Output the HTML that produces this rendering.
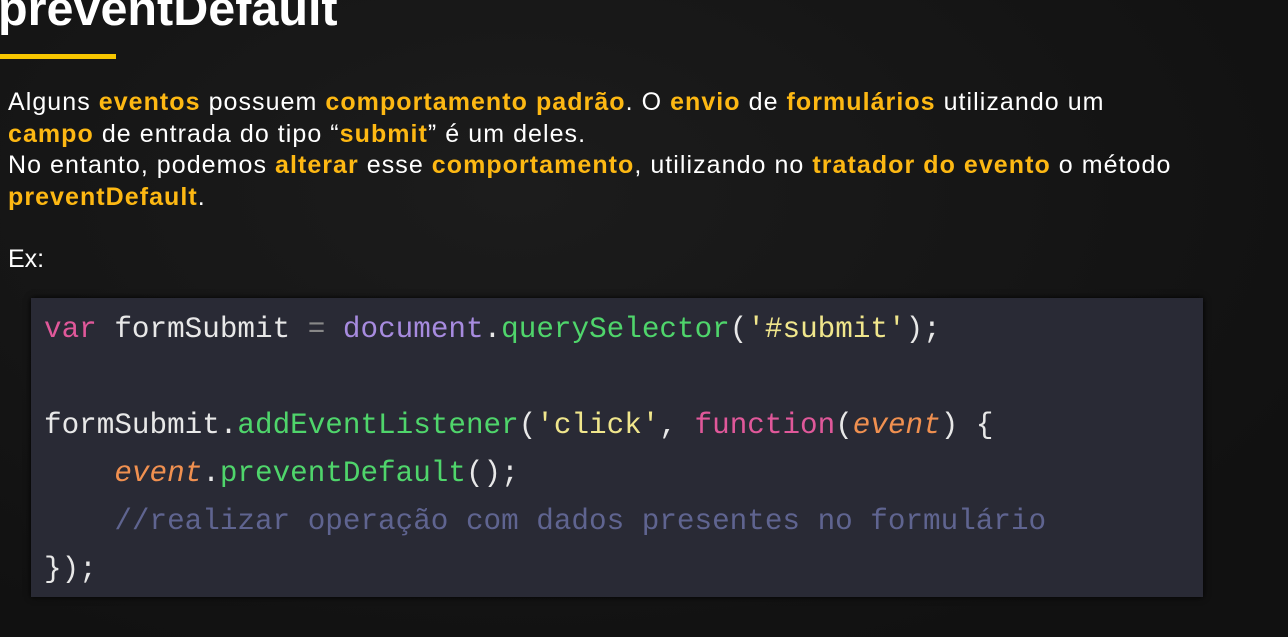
<!DOCTYPE html>
<html><head><meta charset="utf-8"><style>
html,body{margin:0;padding:0;width:1288px;height:637px;overflow:hidden;background:#141414;}
body{position:relative;font-family:"Liberation Sans",sans-serif;background:radial-gradient(ellipse at 40% 30%,#1c1c1c,#111 80%);}
.title{position:absolute;left:-2px;top:-19px;font-size:48.5px;font-weight:bold;color:#fff;letter-spacing:0px}
.bar{position:absolute;left:0;top:54px;width:116px;height:5px;background:#f7c600}
.p{position:absolute;left:8px;top:87px;font-size:25px;line-height:31.5px;color:#fff;white-space:nowrap;letter-spacing:1.05px}
.p b{color:#fdb813}
.ex{position:absolute;left:8px;top:245px;font-size:25px;color:#fff}
.code{position:absolute;left:31px;top:298px;width:1172px;height:299px;background:#292a35;box-shadow:0 0 6px #000}
.code pre{margin:0;position:absolute;left:13px;top:8px;font-family:"Liberation Mono",monospace;font-size:29.3px;line-height:48px;color:#e8e8e8}
.k{color:#e0589a}.d{color:#a78bdf}.f{color:#4fd56b}.s{color:#f0e68c}.e{color:#f09050;font-style:italic}.c{color:#5f6490}.o{color:#888}
</style></head><body>
<div class="title">preventDefault</div>
<div class="bar"></div>
<div class="p">Alguns <b>eventos</b> possuem <b>comportamento padrão</b>. O <b>envio</b> de <b>formulários</b> utilizando um<br><b>campo</b> de entrada do tipo “<b>submit</b>” é um deles.<br>No entanto, podemos <b>alterar</b> esse <b>comportamento</b>, utilizando no <b>tratador do evento</b> o método<br><b>preventDefault</b>.</div>
<div class="ex">Ex:</div>
<div class="code"><pre><span class="k">var</span> formSubmit <span class="o">=</span> <span class="d">document</span>.<span class="f">querySelector</span>(<span class="s">'#submit'</span>);

formSubmit.<span class="f">addEventListener</span>(<span class="s">'click'</span>, <span class="k">function</span>(<span class="e">event</span>) {
    <span class="e">event</span>.<span class="f">preventDefault</span>();
    <span class="c">//realizar operação com dados presentes no formulário</span>
});</pre></div>
</body></html>
